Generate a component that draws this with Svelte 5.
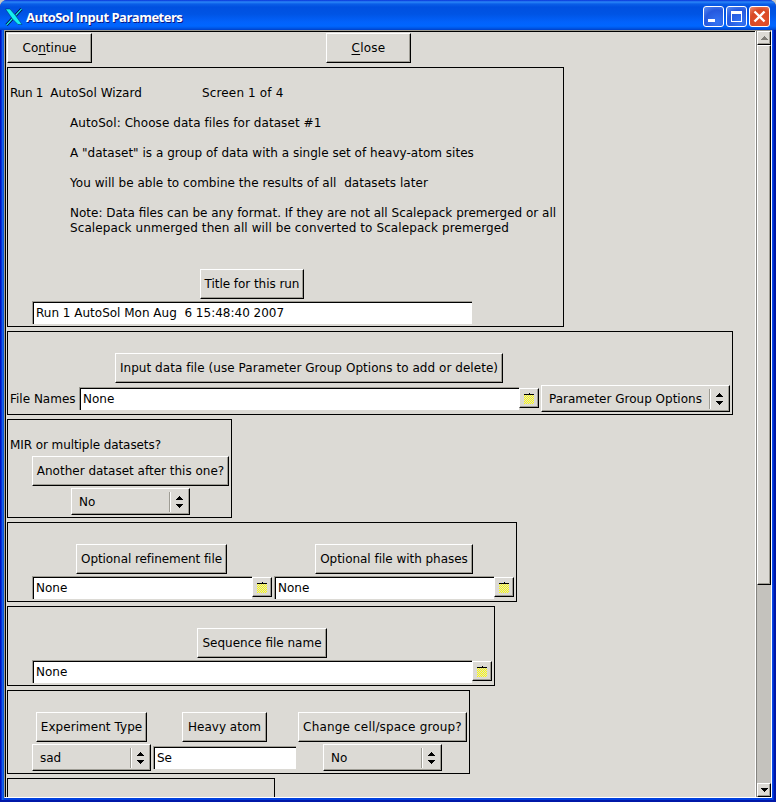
<script>
  const intro = [
    { text: 'AutoSol: Choose data files for dataset #1', spacing: 0.07 },
    { text: ' ', spacing: 0 },
    { text: 'A "dataset" is a group of data with a single set of heavy-atom sites', spacing: 0.02 },
    { text: ' ', spacing: 0 },
    { text: 'You will be able to combine the results of all  datasets later', spacing: 0.04 },
    { text: ' ', spacing: 0 },
    { text: 'Note: Data files can be any format. If they are not all Scalepack premerged or all', spacing: 0 },
    { text: 'Scalepack unmerged then all will be converted to Scalepack premerged', spacing: 0.095 }
  ];

  // Checkerboard of yellow pixels that shades the folder glyph.
  let dither = '';
  for (let y = 2; y < 11; y++) {
    for (let x = y % 2; x < 10; x += 2) dither += `M${x} ${y}h1v1h-1z`;
  }
</script>

{#snippet button(label, width, left, spacing = 0)}
  <button class="push" style:width="{width}px" style:margin-left="{left}px" style:letter-spacing="{spacing}px">{label}</button>
{/snippet}

{#snippet field(value, width, left)}
  <div class="field" style:width="{width}px" style:margin-left="{left}px">{value}</div>
{/snippet}

{#snippet browse()}
  <button class="browse" aria-label="Browse">
    <svg width="10" height="11" viewBox="0 0 10 11" shape-rendering="crispEdges">
      <path d={dither} fill="#ffff00" />
      <path d="M0 1h10v1H0zM5 0h1v1H5z" fill="#000" />
    </svg>
  </button>
{/snippet}

{#snippet option(value, width, left)}
  <div class="option" style:width="{width}px" style:margin-left="{left}px">
    <span>{value}</span>
    <i></i>
    <svg width="7" height="12" viewBox="0 0 7 12" shape-rendering="crispEdges">
      <path d="M3 0h1v1h1v1h1v1h1v1H0V3h1V2h1V1h1zM0 8h7v1H6v1H5v1H4v1H3v-1H2v-1H1V9H0z" fill="#000" />
    </svg>
  </div>
{/snippet}

<div class="window">
  <header>
    <svg class="logo" width="18" height="18" viewBox="0 0 18 18">
      <path d="M16.500 1 10.500 7.500M7.500 10.500 1.500 17" stroke="#001040" stroke-width="3" />
      <path d="M16.500 1 10.500 7.500M7.500 10.500 1.500 17" stroke="#14e8e8" stroke-width="1.200" />
      <path d="M.5 1h4.500L10.500 7.500 17 16.500h-4L7.500 11z" fill="#14f0f0" stroke="#001040" stroke-width=".4" />
    </svg>
    <h1>AutoSol Input Parameters</h1>
    <div class="controls">
      <button aria-label="Minimize"><svg width="19" height="19"><path d="M4 12h7v3H4z" fill="#fff" /></svg></button>
      <button aria-label="Maximize"><svg width="19" height="19"><path d="M4 4h11v11H4zM5 7v7h9V7z" fill="#fff" fill-rule="evenodd" /></svg></button>
      <button class="close" aria-label="Close"><svg width="19" height="19"><path d="M4.500 4.500l10 10M14.500 4.500l-10 10" stroke="#fff" stroke-width="2.400" /></svg></button>
    </div>
  </header>

  <div class="body">
    <main>
      <div class="row">
        <button class="push" style:width="85px">Co<u>n</u>tinue</button>
        <button class="push" style:width="85px" style:margin-left="234px" style:letter-spacing="0.25px"><u>C</u>lose</button>
      </div>

      <section class="intro">
        <div class="row text"><span class="run">{'Run 1  '}<span class="wizard">AutoSol Wizard</span></span><span class="screen">Screen 1 of 4</span></div>
        <div class="notes">
          {#each intro as line}
            <p style:letter-spacing="{line.spacing}px">{line.text}</p>
          {/each}
        </div>
        <div class="row">{@render button('Title for this run', 104, 192, -0.05)}</div>
        <div class="row fields">{@render field('Run 1 AutoSol Mon Aug  6 15:48:40 2007', 440, 24)}</div>
      </section>

      <section class="data">
        <div class="row">{@render button('Input data file (use Parameter Group Options to add or delete)', 388, 107, 0.05)}</div>
        <div class="row options">
          <span class="caption">File Names</span>
          {@render field('None', 440, 0)}
          {@render browse()}
          {@render option('Parameter Group Options', 189, 2)}
        </div>
      </section>

      <section class="mir">
        <div class="row text"><span class="lead">MIR or multiple datasets?</span></div>
        <div class="row">{@render button('Another dataset after this one?', 197, 24)}</div>
        <div class="row options">{@render option('No', 119, 63)}</div>
      </section>

      <section class="optional">
        <div class="row">
          {@render button('Optional refinement file', 151, 68, -0.07)}
          {@render button('Optional file with phases', 158, 88, -0.03)}
        </div>
        <div class="row fields">
          {@render field('None', 220, 24)}
          {@render browse()}
          {@render field('None', 220, 2)}
          {@render browse()}
        </div>
      </section>

      <section class="sequence">
        <div class="row">{@render button('Sequence file name', 130, 189)}</div>
        <div class="row fields">
          {@render field('None', 440, 24)}
          {@render browse()}
        </div>
      </section>

      <section class="experiment">
        <div class="row">
          {@render button('Experiment Type', 111, 28, 0.05)}
          {@render button('Heavy atom', 85, 35)}
          {@render button('Change cell/space group?', 169, 31, 0.17)}
        </div>
        <div class="row options">
          {@render option('sad', 119, 24)}
          {@render field('Se', 143, 2)}
          {@render option('No', 119, 27)}
        </div>
      </section>

      <section class="last"></section>
    </main>

    <div class="scrollbar">
      <div class="arrow"><svg width="7" height="4" shape-rendering="crispEdges"><path d="M3 0h1v1h1v1h1v1h1v1H0V3h1V2h1V1h1z" fill="#7f7d78" /></svg></div>
      <div class="thumb"></div>
      <div class="trough"></div>
      <div class="arrow"><svg width="7" height="4" shape-rendering="crispEdges"><path d="M0 0h7v1H6v1H5v1H4v1H3V3H2V2H1V1H0z" fill="#000" /></svg></div>
    </div>
  </div>
</div>

<style>
  :global(body) {
    background: #c8c8c4;
    overflow: hidden;
  }
  .window {
    box-sizing: border-box;
    width: 776px;
    height: 802px;
    display: flex;
    flex-direction: column;
    padding: 0 4px 4px;
    border-radius: 7px 7px 0 0;
    overflow: hidden;
    background: linear-gradient(90deg, #0013c0 0 1px, #0831d9 1px 2px, #1660e8 2px 3px, #0855dd 3px 4px, #0040e0 4px 772px, #0848e8 772px 773px, #0030d0 773px 774px, #0018a8 774px);
    font: 12px/15px 'DejaVu Sans', sans-serif;
    color: #000;
    box-shadow: inset 0 -2px #0018a8;
  }
  button {
    font: inherit;
    color: inherit;
    padding: 0;
    margin: 0;
    flex: none;
    display: flex;
    align-items: center;
    justify-content: center;
    white-space: pre;
  }
  header {
    height: 30px;
    flex: none;
    display: flex;
    align-items: center;
    margin: 0 -4px;
    padding: 3px 6px 0 5px;
    box-sizing: border-box;
    background: linear-gradient(#0831d9 0, #2a86f8 2px, #0a5ee8 4px, #0050e0 7px, #0054e4 14px, #0262fc 22px, #0066ff 26px, #0058e8 28px, #0040c8 30px);
  }
  h1 {
    flex: 1;
    margin: 0 0 0 3px;
    color: #fff;
    font: bold 13px/20px 'Open Sans', sans-serif;
    letter-spacing: -0.5px;
    text-shadow: 1px 1px #0a1883;
  }
  .controls {
    display: flex;
    gap: 2px;
  }
  .controls button {
    box-sizing: border-box;
    width: 21px;
    height: 21px;
    border: 1px solid #fff;
    border-radius: 3px;
    background: radial-gradient(circle at 70% 80%, #3474f4, #2659de 60%, #5b8df2);
  }
  .controls svg {
    flex: none;
  }
  .controls .close {
    background: radial-gradient(circle at 60% 70%, #e4502a, #d84a26 60%, #ee8f75);
  }
  .body {
    flex: 1;
    min-height: 0;
    display: flex;
    box-sizing: border-box;
    border-top: 1px solid #9e9c94;
    border-left: 1px solid #9e9c94;
    border-right: 1px solid #fff;
    border-bottom: 1px solid #fff;
    background: #dcdad5;
  }
  main {
    width: 750px;
    box-sizing: border-box;
    flex: none;
    border-top: 1px solid #000;
    border-left: 1px solid #000;
    padding: 1px 0 0 1px;
    overflow: hidden;
    display: flex;
    flex-direction: column;
    align-items: flex-start;
    gap: 4px;
  }
  .row {
    display: flex;
    flex: none;
    align-items: flex-start;
  }
  .text {
    padding-left: 2px;
    white-space: pre;
  }
  .run {
    width: 192px;
    letter-spacing: -0.25px;
  }
  .wizard {
    letter-spacing: 0.05px;
  }
  .screen {
    letter-spacing: 0.15px;
  }
  .lead {
    letter-spacing: -0.08px;
  }
  section {
    box-sizing: border-box;
    border: 1px solid #000;
    flex: none;
  }
  .intro { width: 557px; height: 260px; padding-top: 18px; }
  .data { width: 726px; height: 84px; padding-top: 21px; }
  .mir { width: 225px; height: 99px; padding-top: 18px; }
  .mir .text { margin-bottom: 3px; }
  .optional { width: 510px; height: 80px; padding-top: 21px; }
  .sequence { width: 488px; height: 80px; padding-top: 21px; }
  .experiment { width: 463px; height: 84px; padding-top: 21px; }
  .last { width: 268px; height: 80px; }
  .notes {
    margin: 15px 0 33px 62px;
  }
  p {
    margin: 0;
    white-space: pre;
  }
  .push,
  .browse,
  .option {
    box-sizing: border-box;
    border: 1px solid;
    border-color: #fff #000 #000 #fff;
    border-radius: 0;
    background: #dcdad5;
    box-shadow: inset -1px -1px #9e9c94;
  }
  .push {
    height: 30px;
  }
  u {
    text-underline-offset: 2px;
  }
  .field {
    box-sizing: border-box;
    height: 23px;
    flex: none;
    border-top: 1px solid #9e9c94;
    border-left: 1px solid #9e9c94;
    box-shadow: inset 1px 1px #000;
    background: #fff;
    padding: 4px 0 0 3px;
    white-space: pre;
  }
  .fields {
    padding-top: 2px;
  }
  .options {
    padding-top: 2px;
  }
  .options .field {
    margin-top: 2px;
  }
  .caption {
    width: 69px;
    padding: 7px 0 0 2px;
  }
  .browse {
    width: 20px;
    height: 20px;
    margin-top: 1px;
    align-items: flex-start;
    justify-content: flex-start;
    padding: 4px 0 0 4px;
  }
  .options .browse {
    margin-top: 3px;
  }
  .option {
    height: 27px;
    flex: none;
    display: flex;
    align-items: center;
    padding: 1px 6px 0 7px;
    white-space: pre;
  }
  .option span {
    flex: 1;
    padding-top: 1px;
  }
  .option svg {
    margin-bottom: 1px;
  }
  .option i {
    width: 1px;
    height: 20px;
    background: #9e9c94;
    border-right: 1px solid #fff;
    margin-right: 5px;
    margin-bottom: 1px;
  }
  .scrollbar {
    flex: 1;
    display: flex;
    flex-direction: column;
    border-left: 1px solid #fff;
    box-shadow: inset 1px 0 #858480;
    padding-left: 1px;
    background: #c4c2bd;
  }
  .arrow,
  .thumb {
    box-sizing: border-box;
    flex: none;
    border: 1px solid;
    border-color: #fff #000 #000 #fff;
    box-shadow: inset -1px -1px #9e9c94;
    background: #dcdad5;
  }
  .arrow {
    height: 14px;
    display: flex;
    align-items: center;
    justify-content: center;
  }
  .thumb {
    height: 540px;
  }
  .trough {
    flex: 1;
  }
</style>
